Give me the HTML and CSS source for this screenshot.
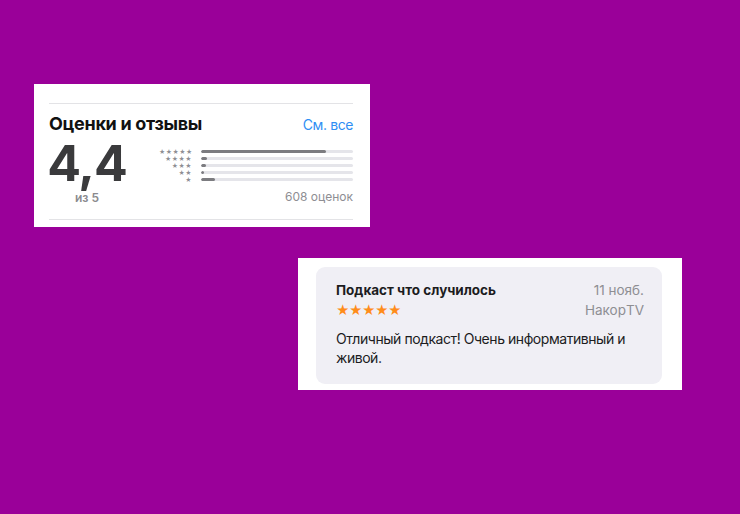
FILE: index.html
```html
<!DOCTYPE html>
<html>
  <head>
    <meta charset="UTF-8">
    <title>Оценки и отзывы</title>
    <link rel="stylesheet" href="styles.css">
  </head>
  <body>
    <div class="ratings">
      <div class="ratings-head">
        <h2>Оценки и отзывы</h2>
        <a class="see-all" href="#">См. все</a>
      </div>
      <div class="ratings-body">
        <div class="score">
          <div class="score-value">4,4</div>
          <div class="score-max">из 5</div>
        </div>
        <div class="bars">
          <div class="bar-row"><span class="stars">★★★★★</span><span class="bar"><span class="fill" style="width: 82%"></span></span></div>
          <div class="bar-row"><span class="stars">★★★★</span><span class="bar"><span class="fill" style="width: 4%"></span></span></div>
          <div class="bar-row"><span class="stars">★★★</span><span class="bar"><span class="fill" style="width: 3%"></span></span></div>
          <div class="bar-row"><span class="stars">★★</span><span class="bar"><span class="fill" style="width: 2%"></span></span></div>
          <div class="bar-row"><span class="stars">★</span><span class="bar"><span class="fill" style="width: 9%"></span></span></div>
          <div class="count">608 оценок</div>
        </div>
      </div>
    </div>

    <div class="review-card">
      <div class="review">
        <div class="review-head">
          <div class="review-title">Подкаст что случилось</div>
          <div class="review-date">11 нояб.</div>
        </div>
        <div class="review-meta">
          <div class="review-stars">★★★★★</div>
          <div class="review-author">НакорTV</div>
        </div>
        <p class="review-text">Отличный подкаст! Очень информативный и живой.</p>
      </div>
    </div>
  </body>
</html>
```

FILE: styles.css
```css
body {
  margin: 0;
  width: 740px;
  height: 514px;
  background-color: #9a0099;
  font-family: Inter, "Noto Sans", sans-serif;
  display: flex;
  flex-direction: column;
  align-items: flex-start;
  overflow: hidden;
}

.ratings {
  margin: 84px 0 0 34px;
  width: 336px;
  height: 143px;
  box-sizing: border-box;
  background-color: #fff;
  padding: 19px 17px 0 15px;
}

.ratings-head {
  border-top: 1px solid #e3e3e6;
  display: flex;
  justify-content: space-between;
  align-items: baseline;
  padding-top: 9px;
}

.ratings-head h2 {
  margin: 0;
  font-size: 18px;
  font-weight: 700;
  color: #111;
  letter-spacing: -0.3px;
}

.see-all {
  font-size: 14px;
  color: #2f8ef4;
  text-decoration: none;
  letter-spacing: -0.4px;
}

.ratings-body {
  display: flex;
  margin-top: 6px;
  border-bottom: 1px solid #e3e3e6;
  padding-bottom: 14px;
}

.score {
  width: 76px;
  display: flex;
  flex-direction: column;
  align-items: center;
}

.score-value {
  font-size: 50px;
  font-weight: 700;
  color: #3a3a3c;
  line-height: 46px;
  letter-spacing: -1px;
}

.score-max {
  font-size: 12px;
  font-weight: 600;
  color: #8a8a8e;
  margin-top: 4px;
}

.bars {
  flex: 1;
  margin-left: 34px;
  padding-top: 8px;
}

.bar-row {
  display: flex;
  align-items: center;
  height: 7px;
}

.stars {
  width: 33px;
  text-align: right;
  font-size: 6px;
  color: #8e8e93;
  letter-spacing: 0.5px;
}

.bar {
  flex: 1;
  margin-left: 9px;
  height: 3px;
  border-radius: 2px;
  background-color: #e5e5ea;
  overflow: hidden;
}

.fill {
  display: block;
  height: 100%;
  background-color: #7c7c80;
  border-radius: 2px;
}

.count {
  text-align: right;
  font-size: 12px;
  color: #8e8e93;
  margin-top: 6px;
}

.review-card {
  margin: 31px 0 0 298px;
  width: 384px;
  height: 132px;
  box-sizing: border-box;
  background-color: #fff;
  padding: 9px 20px 6px 18px;
}

.review {
  height: 100%;
  box-sizing: border-box;
  background-color: #f0eff5;
  border-radius: 9px;
  padding: 15px 18px 0 20px;
}

.review-head,
.review-meta {
  display: flex;
  justify-content: space-between;
  align-items: center;
}

.review-title {
  font-size: 13.5px;
  font-weight: 700;
  color: #1c1c1e;
}

.review-date,
.review-author {
  font-size: 13.5px;
  color: #8e8e93;
}

.review-meta {
  margin-top: 4px;
}

.review-stars {
  font-size: 13px;
  color: #ff8c1a;
  letter-spacing: -0.6px;
}

.review-text {
  margin: 11px 0 0;
  font-size: 14px;
  line-height: 19px;
  letter-spacing: -0.45px;
  color: #1c1c1e;
  width: 310px;
}
```
